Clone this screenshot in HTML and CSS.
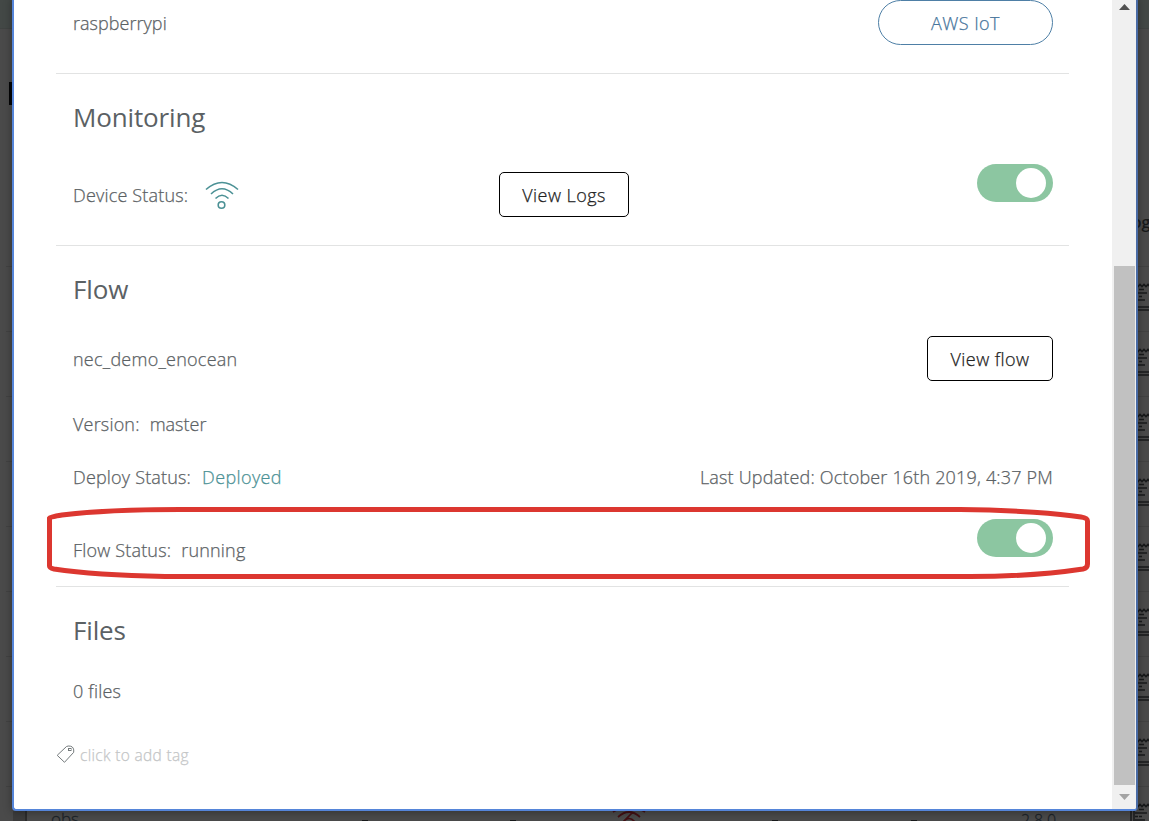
FILE: index.html
```html
<!DOCTYPE html>
<html lang="en">
<head>
<meta charset="utf-8">
<title>Device details</title>
<link rel="stylesheet" href="styles.css">
</head>
<body>
<svg class="defs" aria-hidden="true">
  <defs>
    <g id="log-icon" fill="none" stroke="#181a1b" stroke-width="1.500">
      <path d="M1 0V30M4 0V30"/>
      <path d="M0 3.500l2-2 2 2 2-2 2 2 2-2 2 2 2-2 2 2 2-2 2 2 2-2 2 2" stroke-width="1.700"/>
      <path d="M9 6.500h5M5 10h12M5 13.500h3M9 13.500h3M5 17h10"/>
      <path d="M0 24h22M0 27h22"/>
    </g>
  </defs>
</svg>
<div class="backdrop">
  <div class="header-strip"></div>
  <span class="cursor-bar"></span>
  <div class="list-rows">
    <div class="list-row"></div><div class="list-row"></div><div class="list-row"></div>
    <div class="list-row"></div><div class="list-row"></div><div class="list-row"></div>
    <div class="list-row"></div><div class="list-row"></div><div class="list-row"></div>
  </div>
  <span class="column-name">Log</span>
  <div class="log-column">
    <svg><use href="#log-icon"/></svg><svg><use href="#log-icon"/></svg><svg><use href="#log-icon"/></svg>
    <svg><use href="#log-icon"/></svg><svg><use href="#log-icon"/></svg><svg><use href="#log-icon"/></svg>
    <svg><use href="#log-icon"/></svg><svg><use href="#log-icon"/></svg><svg><use href="#log-icon"/></svg>
  </div>
  <div class="last-row">
    <span class="checkbox-edge"></span>
    <span class="device-name">obs</span>
    <span class="speck speck-a"></span><span class="speck speck-b"></span>
    <svg class="offline" viewBox="0 0 34 14"><g fill="none" stroke="#421014" stroke-width="1.700"><path d="M1 2Q17 -8 33 2M6 7Q17 -3 28 7M11 12Q17 5 23 12M21 2L10 13"/></g></svg>
    <span class="speck speck-c"></span><span class="speck speck-d"></span>
    <span class="version-number">2.8.0</span>
  </div>
</div>

<main class="modal">
  <div class="content">
    <section class="section device">
      <span class="device-id">raspberrypi</span>
      <button class="pill">AWS IoT</button>
    </section>
    <section class="section monitoring">
      <h2>Monitoring</h2>
      <div class="monitor-row">
        <div class="status"><span>Device Status:</span>
          <svg class="wifi" viewBox="0 0 34 30"><g fill="none" stroke="#4b9195" stroke-width="1.600"><path d="M1 8.500Q17 -5.500 33 8.500M6 13Q17 2.500 28 13M10.500 17.500Q17 11 23.500 17.500"/><circle cx="16.500" cy="24" r="3.300"/></g></svg>
        </div>
        <button class="box-button logs">View Logs</button>
        <span class="toggle"><span class="knob"></span></span>
      </div>
    </section>
    <section class="section flow">
      <h2>Flow</h2>
      <div class="flow-row"><span class="flow-name">nec_demo_enocean</span><button class="box-button view-flow">View flow</button></div>
      <div class="version-row"><span>Version:</span><span class="version-value">master</span></div>
      <div class="deploy-row"><span>Deploy Status:</span><span class="deployed">Deployed</span><span class="updated">Last Updated: October 16th 2019, 4:37 PM</span></div>
      <div class="state-row"><span>Flow Status:</span><span>running</span><span class="toggle"><span class="knob"></span></span></div>
    </section>
    <section class="files">
      <h2>Files</h2>
      <p>0 files</p>
    </section>
    <div class="tag-row">
      <svg class="tag" viewBox="0 0 20 20"><path d="M1.500 10L10.500 1.500Q12 .7 14.500 1.200Q18.300 2 17.700 7.300L8.500 17.300L1.200 10.300Z" fill="none" stroke="#747a7c" stroke-width="1"/><rect x="12.500" y="3.500" width="2.500" height="2" fill="none" stroke="#747a7c"/></svg>
      <span>click to add tag</span>
    </div>
  </div>
  <div class="scrollbar">
    <svg class="arrow" viewBox="0 0 11 6"><path d="M0 6L5.500 0L11 6Z" fill="#505050"/></svg>
    <div class="thumb"></div>
    <svg class="arrow" viewBox="0 0 11 6"><path d="M0 0H11L5.500 6Z" fill="#a3a3a3"/></svg>
  </div>
</main>

<svg class="annotation" viewBox="0 0 1149 821"><path d="M49.500 518C50 517 56 516 62 515C95 511 130 509.500 180 509.500H960C1015 510 1061 514 1081 517Q1087.500 518 1087.500 521V564Q1087.500 568 1083 569C1050 574 1010 576.500 970 576.500H165C115 575.500 74 572 54 569Q49.500 568 49.500 566Z" fill="none" stroke="#dc3730" stroke-width="5"/></svg>
</body>
</html>
```
FILE: styles.css
```css
* { box-sizing: border-box; }
html, body { height: 100%; }
body {
  position: relative;
  margin: 0;
  overflow: hidden;
  background: #4a4a4a;
  color: #5b6164;
  font: 300 18px/24px "Open Sans", "Noto Sans", sans-serif;
}
.defs { position: absolute; width: 0; height: 0; }

/* Dimmed page behind the dialog */
.backdrop { position: absolute; inset: 0; overflow: hidden; background: #4a4a4a; }
.header-strip { height: 29px; background: #434846; border-bottom: 1px solid #404342; }
.cursor-bar { position: absolute; left: 9px; top: 82px; width: 5px; height: 23px; background: #030405; }
.list-rows { position: absolute; left: 6px; right: 0; top: 202px; }
.list-row { height: 65px; border-bottom: 1px solid #424242; }
.column-name { position: absolute; left: 1123px; top: 210px; color: #181a1b; font-weight: 600; font-size: 16px; }
.log-column { position: absolute; left: 1130px; top: 283px; display: grid; grid-auto-rows: 65px; }
.log-column svg { width: 22px; height: 31px; }
.last-row { position: absolute; left: 0; top: 807px; width: 1149px; height: 14px; overflow: hidden; color: #1c2329; }
.last-row > * { position: absolute; }
.checkbox-edge { left: 13px; top: 4px; width: 14px; height: 12px; background: #3c3c3c; border-right: 2px solid #2c2c2c; }
.device-name { left: 51px; top: 0; font-size: 17px; -webkit-text-stroke: .3px; }
.offline { left: 612px; top: 3px; width: 34px; height: 14px; }
.speck { top: 13px; width: 6px; height: 2px; background: #181a1b; }
.speck-a { left: 362px; }
.speck-b { left: 510px; }
.speck-c { left: 772px; }
.speck-d { left: 911px; }
.version-number { left: 1021px; top: 1px; font-size: 16px; -webkit-text-stroke: .3px; }

/* Dialog */
.modal {
  position: absolute;
  left: 12px; top: -4px;
  width: 1126px; height: 815px;
  display: flex;
  overflow: hidden;
  background: #fff;
  border: 2px solid #5585d9;
  border-right-color: #496ba5;
  border-radius: 4px;
  box-shadow: 0 1px 8px rgba(0, 0, 0, .35);
  letter-spacing: .18px;
  -webkit-text-stroke: .25px;
}
.content { width: 1098px; padding: 2px 43px 0 42px; }
.section { border-bottom: 1px solid #e2e3e3; padding: 0 16px 0 17px; }
h2 { margin: 0; font-weight: 400; font-size: 26px; line-height: 36px; letter-spacing: -.15px; -webkit-text-stroke: 0; }
button { background: #fff; font: inherit; height: 45px; padding: 0; text-align: center; letter-spacing: .45px; }
.pill { width: 175px; border: 1px solid #4e7fa6; border-radius: 23px; color: #47759c; }
.device { height: 74px; display: flex; justify-content: space-between; align-items: flex-start; }
.device-id { margin-top: 11px; letter-spacing: .04px; }
.monitoring { height: 172px; padding-top: 25px; }
.monitor-row { display: grid; grid-template-columns: 426px 130px 1fr; margin-top: 29px; height: 64px; }
.status { display: flex; gap: 17px; margin-top: 19px; }
.wifi { width: 34px; height: 30px; margin-top: -2px; }
.box-button { border: 1px solid #000; border-radius: 5px; color: #222; }
.logs { width: 130px; margin-top: 8px; }
.view-flow { width: 126px; }
.toggle { width: 76px; height: 38px; margin-left: auto; padding: 4px 7px; border-radius: 19px; background: #8cc6a1; display: flex; justify-content: flex-end; }
.knob { width: 30px; height: 30px; border-radius: 50%; background: #fff; }
.flow { height: 341px; padding-top: 25px; }
.flow-row { display: flex; justify-content: space-between; align-items: center; margin-top: 29px; height: 45px; }
.flow-name { letter-spacing: .24px; }
.version-row { display: flex; gap: 10px; margin-top: 31px; }
.version-value { letter-spacing: 0; }
.deploy-row { display: flex; gap: 11px; margin-top: 29px; }
.deployed { color: #4b9195; letter-spacing: .38px; }
.updated { margin-left: auto; }
.state-row { display: flex; gap: 10px; align-items: flex-start; margin-top: 30px; }
.state-row > span:not(.toggle) { margin-top: 19px; }
.files { padding: 25px 17px 0; height: 143px; }
.files p { margin: 31px 0 0; }
.tag-row { display: flex; gap: 4px; margin-top: 14px; color: #c4c6c7; font-size: 15.5px; letter-spacing: .32px; line-height: 23px; }
.tag { width: 20px; height: 20px; margin-top: 1px; }
.scrollbar { width: 24px; background: #f0f0f0; display: flex; flex-direction: column; align-items: center; padding-top: 6px; }
.arrow { width: 11px; height: 6px; }
.thumb { width: 21px; height: 519px; margin: 256px 0 9px; background: #c1c1c1; }
.annotation { position: absolute; left: 0; top: 0; width: 1149px; height: 821px; pointer-events: none; }
```
